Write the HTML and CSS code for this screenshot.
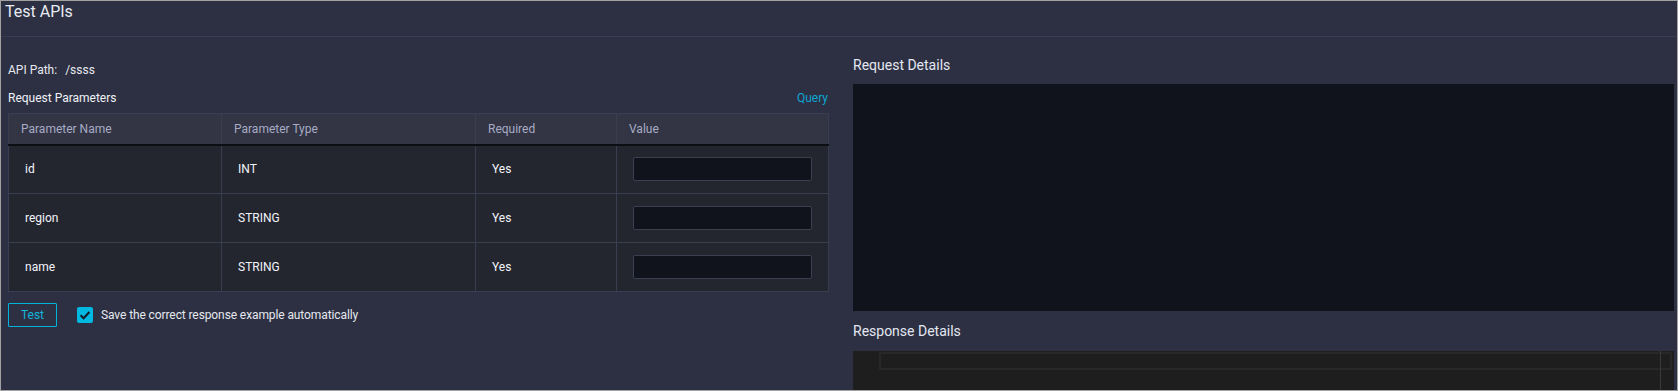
FILE: index.html
```html
<!DOCTYPE html>
<html lang="en">
<head>
<meta charset="utf-8">
<title>Test APIs</title>
<link rel="stylesheet" href="styles.css">
</head>
<body>
<div class="page">
  <header class="title-bar">
    <h1 class="title">Test APIs</h1>
  </header>
  <main class="content">
    <section class="left">
      <div class="api-path"><span class="label">API Path:</span><span class="path">/ssss</span></div>
      <div class="params-head">
        <span class="params-title">Request Parameters</span>
        <a class="query-link">Query</a>
      </div>
      <table class="params">
        <colgroup>
          <col class="c-name"><col class="c-type"><col class="c-req"><col class="c-val">
        </colgroup>
        <thead>
          <tr><th>Parameter Name</th><th>Parameter Type</th><th>Required</th><th>Value</th></tr>
        </thead>
        <tbody>
          <tr><td>id</td><td>INT</td><td>Yes</td><td><input class="value-input" type="text"></td></tr>
          <tr><td>region</td><td>STRING</td><td>Yes</td><td><input class="value-input" type="text"></td></tr>
          <tr><td>name</td><td>STRING</td><td>Yes</td><td><input class="value-input" type="text"></td></tr>
        </tbody>
      </table>
      <div class="actions">
        <button class="test-btn" type="button">Test</button>
        <label class="save-opt">
          <span class="checkbox"><svg width="16" height="16" viewBox="0 0 16 16"><path d="M3.6 8.2 L6.6 11.2 L12.4 5" fill="none" stroke="#161a26" stroke-width="2"/></svg></span>
          <span class="save-text">Save the correct response example automatically</span>
        </label>
      </div>
    </section>
    <section class="right">
      <h2 class="sub-title req-title">Request Details</h2>
      <div class="request-box"></div>
      <h2 class="sub-title resp-title">Response Details</h2>
      <div class="response-box">
        <div class="cur-line"></div>
        <div class="ruler"></div>
      </div>
    </section>
  </main>
</div>
</body>
</html>
```
FILE: styles.css
```css
* { box-sizing: border-box; }
html, body { margin: 0; padding: 0; }
body {
  font-family: Roboto, "Noto Sans", "Liberation Sans", sans-serif;
  font-size: 12px;
  color: #e6e8ef;
  background: #2d3042;
}
.page {
  width: 1678px;
  height: 391px;
  border: 1px solid #a2a2a2;
  background: #2d3042;
  overflow: hidden;
}
.title-bar {
  height: 36px;
  padding: 1px 4px 0;
  border-bottom: 1px solid #3a3d51;
}
.title {
  margin: 0;
  font-size: 16px;
  font-weight: 400;
  line-height: 19px;
  color: #e8eaf2;
}
.content {
  display: grid;
  grid-template-columns: 820px 821px;
  column-gap: 25px;
  padding: 18px 3px 0 7px;
}
.left { padding-top: 6px; }
.api-path {
  line-height: 18px;
  display: flex;
  gap: 8px;
}
.params-head {
  margin-top: 10px;
  display: flex;
  justify-content: space-between;
  line-height: 18px;
}
.params-title { font-weight: 400; color: #f0f2f8; }
.query-link { color: #0ea6d4; cursor: pointer; }
.params {
  margin-top: 6px;
  width: 100%;
  border-collapse: collapse;
  table-layout: fixed;
}
.c-name { width: 213px; }
.c-type { width: 254px; }
.c-req { width: 141px; }
.c-val { width: 212px; }
.params th, .params td {
  border: 1px solid #3a3d50;
  text-align: left;
}
.params th {
  height: 31px;
  padding: 0 12px;
  background: #333545;
  color: #a7abc4;
  font-weight: 400;
  border-bottom: 2px solid #0c0e13;
}
.params td {
  height: 49px;
  padding: 0 16px;
  background: #24262f;
  color: #f2f4fa;
  font-weight: 400;
}
.value-input {
  display: block;
  width: 100%;
  height: 24px;
  background: #10131b;
  border: 1px solid #3c3f51;
  border-radius: 2px;
  color: #e6e8ef;
  outline: none;
}
.actions {
  margin-top: 11px;
  display: flex;
  align-items: center;
}
.test-btn {
  width: 49px;
  height: 24px;
  padding: 0;
  background: transparent;
  border: 1px solid #00b4d9;
  border-radius: 1px;
  color: #14b6dc;
  font-family: inherit;
  font-size: 12px;
}
.save-opt {
  margin-left: 20px;
  display: flex;
  align-items: center;
  gap: 8px;
  color: #e6e8ef;
}
.save-text { letter-spacing: -0.1px; }
.checkbox {
  width: 16px;
  height: 16px;
  border-radius: 2px;
  background: #00b8e0;
  display: block;
}
.checkbox svg { display: block; }
.sub-title {
  margin: 0;
  font-size: 14px;
  font-weight: 400;
  line-height: 20px;
  color: #e3e7f2;
}
.req-title { margin-bottom: 9px; }
.request-box {
  height: 227px;
  background: #10131c;
}
.resp-title { margin: 10px 0 10px; }
.response-box {
  position: relative;
  height: 60px;
  background: #1e1e1e;
}
.cur-line {
  position: absolute;
  left: 26px;
  right: 2px;
  top: 1px;
  height: 18px;
  border: 2px solid #282828;
}
.ruler {
  position: absolute;
  right: 13px;
  top: 0;
  bottom: 0;
  width: 1px;
  background: #3a3a3a;
}
```
